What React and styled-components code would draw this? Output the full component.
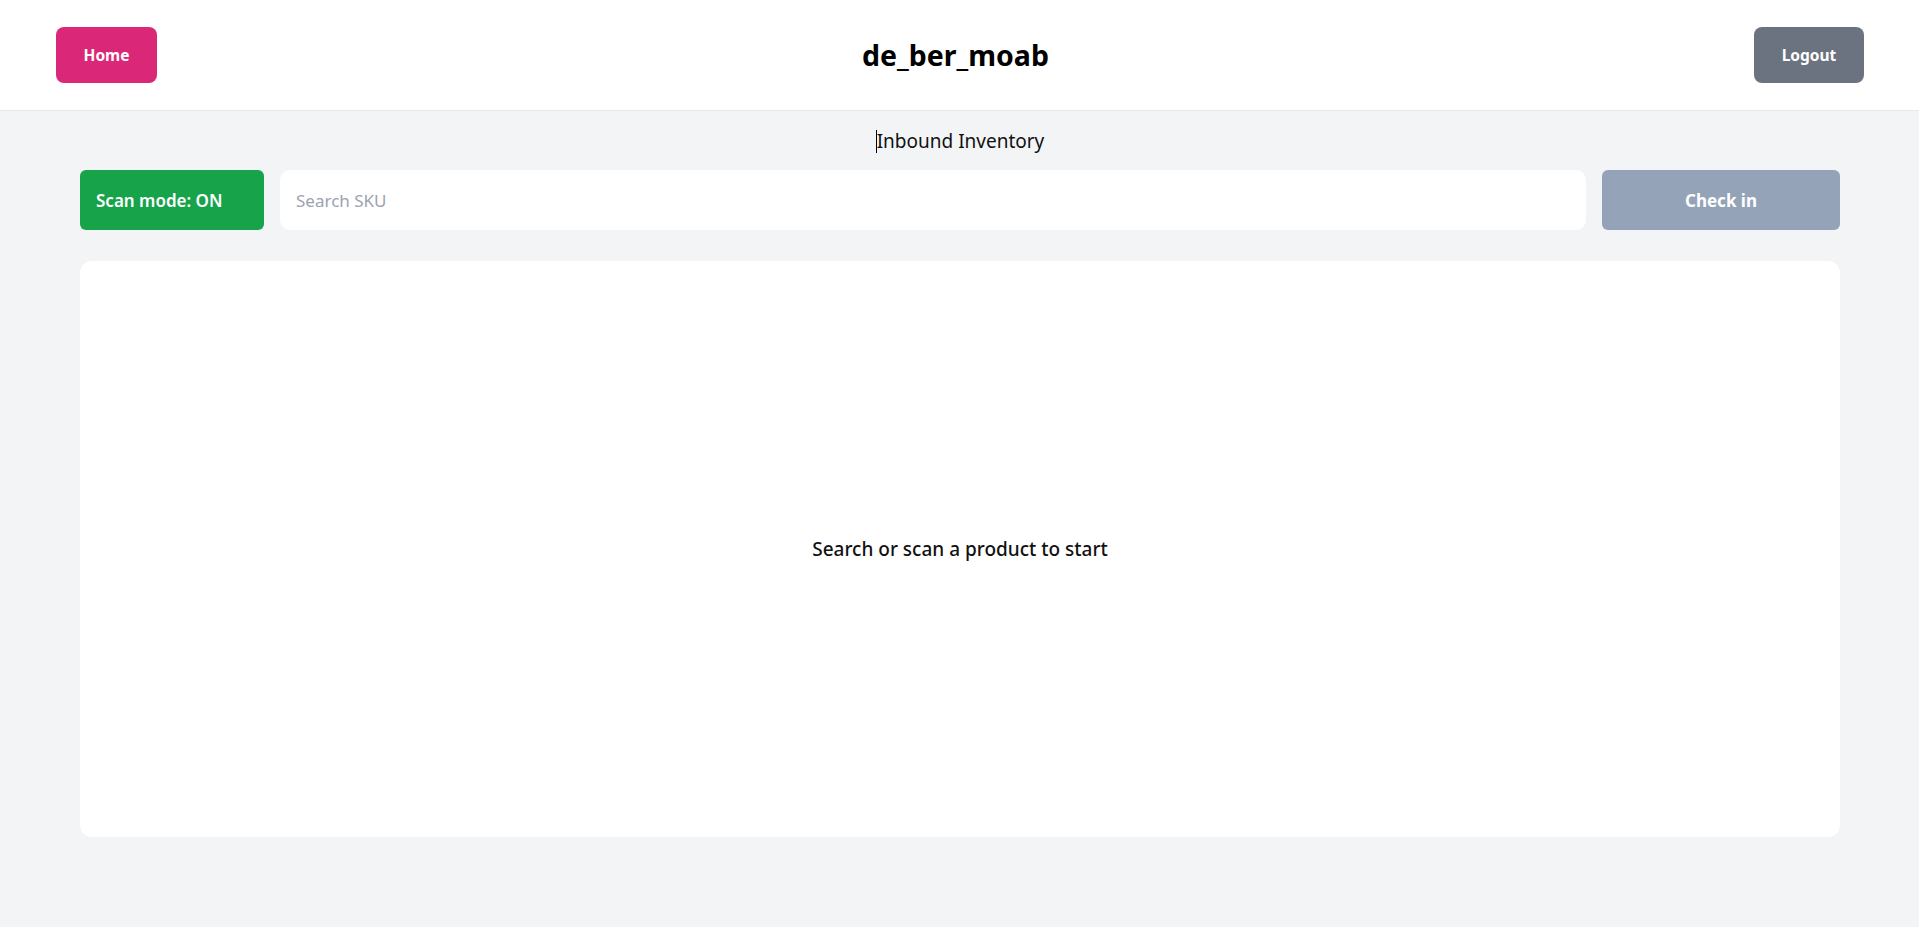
import React from "react";
import styled, { createGlobalStyle } from "styled-components";

const GlobalStyle = createGlobalStyle`
  * {
    box-sizing: border-box;
  }
  body {
    margin: 0;
    background-color: #f3f4f6;
    font-family: "Noto Sans", "Open Sans", Arial, sans-serif;
    color: #111827;
  }
`;

export default function App() {
  return (
    <>
      <GlobalStyle />
      <Header>
        <NavButton color="#db2777">Home</NavButton>
        <Title>de_ber_moab</Title>
        <NavButton color="#6b7280" wide>
          Logout
        </NavButton>
      </Header>
      <Main>
        <PageTitle>
          <Caret />
          Inbound Inventory
        </PageTitle>
        <Toolbar>
          <ScanButton>Scan mode: ON</ScanButton>
          <SearchInput placeholder="Search SKU" />
          <CheckInButton disabled>Check in</CheckInButton>
        </Toolbar>
        <Card>
          <EmptyText>Search or scan a product to start</EmptyText>
        </Card>
      </Main>
    </>
  );
}

const Header = styled.header`
  height: 111px;
  background-color: #ffffff;
  border-bottom: 1px solid #e5e7eb;
  display: flex;
  justify-content: space-between;
  align-items: center;
  padding: 0 55px 1px 56px;
`;

const NavButton = styled.button`
  width: ${({ wide }) => (wide ? "110px" : "101px")};
  height: 56px;
  border: none;
  border-radius: 8px;
  background-color: ${({ color }) => color};
  color: #ffffff;
  font-family: inherit;
  font-size: 15.5px;
  font-weight: 700;
  cursor: pointer;
`;

const Title = styled.h1`
  margin: 0;
  font-size: 28.5px;
  font-weight: 700;
  color: #000000;
`;

const Main = styled.main`
  padding: 0 79px 0 80px;
`;

const PageTitle = styled.div`
  text-align: center;
  font-size: 19px;
  line-height: 28px;
  padding-top: 16px;
  color: #111111;
`;

const Caret = styled.span`
  display: inline-block;
  width: 1px;
  height: 23px;
  background-color: #000000;
  vertical-align: -5px;
`;

const Toolbar = styled.div`
  display: flex;
  gap: 16px;
  height: 60px;
  margin-top: 15px;
`;

const ScanButton = styled.button`
  width: 184px;
  flex-shrink: 0;
  border: none;
  border-radius: 6px;
  background-color: #16a34a;
  color: #ffffff;
  font-family: inherit;
  font-size: 17px;
  font-weight: 600;
  text-align: left;
  padding: 0 16px;
  cursor: pointer;
`;

const SearchInput = styled.input`
  flex: 1;
  border: none;
  border-radius: 10px;
  background-color: #ffffff;
  padding: 0 16px;
  font-family: inherit;
  font-size: 17px;
  color: #111827;
  outline: none;

  &::placeholder {
    color: #9ca3af;
  }
`;

const CheckInButton = styled.button`
  width: 238px;
  flex-shrink: 0;
  border: none;
  border-radius: 6px;
  background-color: #94a3b8;
  color: #ffffff;
  font-family: inherit;
  font-size: 17px;
  font-weight: 700;
`;

const Card = styled.section`
  margin-top: 31px;
  height: 576px;
  background-color: #ffffff;
  border-radius: 12px;
  display: flex;
  justify-content: center;
  align-items: center;
`;

const EmptyText = styled.p`
  margin: 0;
  font-size: 19px;
  font-weight: 500;
  color: #111111;
`;
